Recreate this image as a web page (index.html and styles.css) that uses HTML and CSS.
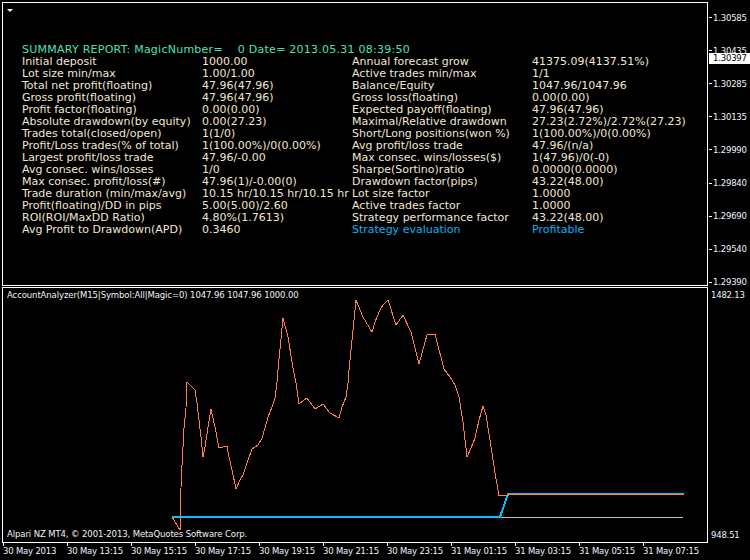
FILE: index.html
```html
<!DOCTYPE html>
<html>
<head>
<meta charset="utf-8">
<link rel="stylesheet" href="styles.css">
</head>
<body>
<div class="window">
  <section class="panel panel-top">
    <span class="tri"></span>
    <div class="report">
      <div class="summary">SUMMARY REPORT: MagicNumber=    0 Date= 2013.05.31 08:39:50</div>
      <span>Initial deposit</span><span>1000.00</span><span>Annual forecast grow</span><span>41375.09(4137.51%)</span>
      <span>Lot size min/max</span><span>1.00/1.00</span><span>Active trades min/max</span><span>1/1</span>
      <span>Total net profit(floating)</span><span>47.96(47.96)</span><span>Balance/Equity</span><span>1047.96/1047.96</span>
      <span>Gross profit(floating)</span><span>47.96(47.96)</span><span>Gross loss(floating)</span><span>0.00(0.00)</span>
      <span>Profit factor(floating)</span><span>0.00(0.00)</span><span>Expected payoff(floating)</span><span>47.96(47.96)</span>
      <span>Absolute drawdown(by equity)</span><span>0.00(27.23)</span><span>Maximal/Relative drawdown</span><span>27.23(2.72%)/2.72%(27.23)</span>
      <span>Trades total(closed/open)</span><span>1(1/0)</span><span>Short/Long positions(won %)</span><span>1(100.00%)/0(0.00%)</span>
      <span>Profit/Loss trades(% of total)</span><span>1(100.00%)/0(0.00%)</span><span>Avg profit/loss trade</span><span>47.96/(n/a)</span>
      <span>Largest profit/loss trade</span><span>47.96/-0.00</span><span>Max consec. wins/losses($)</span><span>1(47.96)/0(-0)</span>
      <span>Avg consec. wins/losses</span><span>1/0</span><span>Sharpe(Sortino)ratio</span><span>0.0000(0.0000)</span>
      <span>Max consec. profit/loss(#)</span><span>47.96(1)/-0.00(0)</span><span>Drawdown factor(pips)</span><span>43.22(48.00)</span>
      <span>Trade duration (min/max/avg)</span><span>10.15 hr/10.15 hr/10.15 hr</span><span>Lot size factor</span><span>1.0000</span>
      <span>Profit(floating)/DD in pips</span><span>5.00(5.00)/2.60</span><span>Active trades factor</span><span>1.0000</span>
      <span>ROI(ROI/MaxDD Ratio)</span><span>4.80%(1.7613)</span><span>Strategy performance factor</span><span>43.22(48.00)</span>
      <span>Avg Profit to Drawdown(APD)</span><span>0.3460</span><span class="eval">Strategy evaluation</span><span class="eval">Profitable</span>
    </div>
  </section>

  <aside class="axis axis-top">
    <div class="tick-label"><i></i>1.30585</div>
    <div class="tick-label"><i></i>1.30435</div>
    <div class="tick-label"><i></i>1.30285</div>
    <div class="tick-label"><i></i>1.30135</div>
    <div class="tick-label"><i></i>1.29990</div>
    <div class="tick-label"><i></i>1.29840</div>
    <div class="tick-label"><i></i>1.29690</div>
    <div class="tick-label"><i></i>1.29540</div>
    <div class="tick-label"><i></i>1.29390</div>
    <div class="cur-price">1.30397</div>
  </aside>

  <section class="panel panel-ind">
    <svg class="chart" viewBox="3 288 704 254" shape-rendering="crispEdges">
      <polyline class="l-gray" points="172,517.5 683,517.5"/>
      <polyline class="l-blue" points="172,517 500,517 508,494 684,494"/>
      <polyline class="l-orange" points="172,517 180,530 181,488 182,465 183,447 184,428 186,408 187,382 195,390 197,403 199,420 201,437 203,457 205,447 208,427 211,409 215,427 219,448 227,446 229,457 232,470 236,489 240,480 243,475 247,463 252,449 258,445 262,438 265,428 268,417 272,407 275,398 277,382 278,370 283,318 288,337 293,368 296,383 299,404 307,398 315,409 323,404 330,413 339,418 342,407 346,397 348,383 349,370 353,330 356,300 363,317 372,332 375,322 380,310 383,305 388,300 396,325 403,315 411,332 419,364 427,335 435,334 444,369 450,377 455,385 459,397 463,422 467,457 471,448 475,438 479,420 483,406 486,415 492,453 495,473 499,495.5 507,495.5 508,494.5 683,494.5"/>
    </svg>
    <div class="ind-text">
      <div>AccountAnalyzer(M15|Symbol:All|Magic=0) 1047.96 1047.96 1000.00</div>
      <div>Alpari NZ MT4, © 2001-2013, MetaQuotes Software Corp.</div>
    </div>
  </section>

  <aside class="axis axis-ind">
    <div>1482.13</div>
    <div>948.51</div>
  </aside>

  <footer class="axis time-axis">
    <div class="t"><i></i><span>30 May 2013</span></div>
    <div class="t"><i></i><span>30 May 13:15</span></div>
    <div class="t"><i></i><span>30 May 15:15</span></div>
    <div class="t"><i></i><span>30 May 17:15</span></div>
    <div class="t"><i></i><span>30 May 19:15</span></div>
    <div class="t"><i></i><span>30 May 21:15</span></div>
    <div class="t"><i></i><span>30 May 23:15</span></div>
    <div class="t"><i></i><span>31 May 01:15</span></div>
    <div class="t"><i></i><span>31 May 03:15</span></div>
    <div class="t"><i></i><span>31 May 05:15</span></div>
    <div class="t"><i></i><span>31 May 07:15</span></div>
  </footer>
</div>
</body>
</html>
```

FILE: styles.css
```css
html, body {
  margin: 0;
  background: #000;
}
body {
  width: 750px;
  height: 560px;
  overflow: hidden;
  font-family: "DejaVu Sans", "Liberation Sans", sans-serif;
}
.window {
  display: grid;
  grid-template-columns: 706px 42px;
  grid-template-rows: 284px 257px 17px;
  padding: 2px 0 0 2px;
}
.panel {
  border: 1px solid #fff;
  box-sizing: border-box;
  background: #000;
}
.panel-top {
  grid-column: 1;
  grid-row: 1;
  display: flex;
  flex-direction: column;
  align-items: flex-start;
}
.tri {
  margin: 6px 0 0 4px;
  width: 0;
  height: 0;
  border-left: 3px solid transparent;
  border-right: 3px solid transparent;
  border-top: 3px solid #fff;
}
.report {
  margin: 32px 0 0 19px;
  display: grid;
  grid-template-columns: 180px 150px 180px 170px;
  font-size: 11px;
  line-height: 12px;
  color: #f2e6d0;
  white-space: nowrap;
}
.summary {
  grid-column: 1 / -1;
  color: #4fe0b8;
  white-space: pre;
  letter-spacing: 0.25px;
}
.eval {
  color: #10b0f0;
}

.axis {
  color: #eef4ff;
  font-size: 8.5px;
  letter-spacing: -0.2px;
  white-space: nowrap;
}
.axis-top {
  grid-column: 2;
  grid-row: 1;
  position: relative;
  display: flex;
  flex-direction: column;
  gap: 21.05px;
  padding-top: 9.8px;
}
.tick-label {
  display: flex;
  align-items: center;
  height: 12px;
  line-height: 12px;
}
.tick-label i {
  width: 3px;
  height: 1px;
  margin: 0 1px 0 1px;
  background: #fff;
}
.cur-price {
  position: absolute;
  top: 51px;
  left: 1px;
  right: 0;
  height: 11px;
  line-height: 11px;
  padding-left: 4px;
  background: #fff;
  color: #000;
}

.panel-ind {
  grid-column: 1;
  grid-row: 2;
  margin-top: 1px;
  display: grid;
}
.panel-ind > * {
  grid-area: 1 / 1;
}
.chart {
  display: block;
  width: 704px;
  height: 254px;
}
.chart polyline {
  fill: none;
}
.l-gray {
  stroke: #c0c0c0;
  stroke-width: 1;
}
.l-blue {
  stroke: #00bfff;
  stroke-width: 2;
}
.l-orange {
  stroke: #ff7f50;
  stroke-width: 1;
}
.ind-text {
  display: flex;
  flex-direction: column;
  justify-content: space-between;
  padding: 1px 4px 2px;
  font-size: 8.5px;
  line-height: 12px;
  letter-spacing: -0.1px;
  color: #f4f4f4;
  white-space: nowrap;
}

.axis-ind {
  grid-column: 2;
  grid-row: 2;
  display: flex;
  flex-direction: column;
  justify-content: space-between;
  padding: 3px 0 2px 3px;
  line-height: 12px;
}

.time-axis {
  grid-column: 1 / -1;
  grid-row: 3;
  display: flex;
  padding-left: 1px;
}
.t {
  flex: none;
  width: 64px;
  display: flex;
  flex-direction: column;
  align-items: flex-start;
}
.t i {
  width: 1px;
  height: 3px;
  background: #fff;
}
.t span {
  line-height: 11px;
}
```
